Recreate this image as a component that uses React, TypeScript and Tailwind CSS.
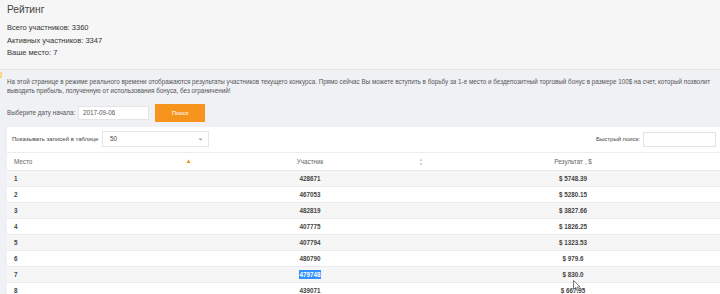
import React from "react";

const rows = [
  { place: "1", user: "428671", result: "$ 5748.39" },
  { place: "2", user: "467053", result: "$ 5280.15" },
  { place: "3", user: "482819", result: "$ 3827.66" },
  { place: "4", user: "407775", result: "$ 1826.25" },
  { place: "5", user: "407794", result: "$ 1323.53" },
  { place: "6", user: "480790", result: "$ 979.6" },
  { place: "7", user: "479748", result: "$ 830.0", selected: true },
  { place: "8", user: "439071", result: "$ 667.95" },
];

function SortAsc() {
  return (
    <svg width="5" height="6" viewBox="0 0 5 6" className="block">
      <path d="M2.5 0.5 L4.5 4 L0.5 4 Z" fill="#f7941d" />
    </svg>
  );
}

function SortBoth() {
  return (
    <svg width="4" height="8" viewBox="0 0 4 8" className="block">
      <path d="M2 0.5 L3.6 3 L0.4 3 Z" fill="#cfcfcf" />
      <path d="M2 7.5 L3.6 5 L0.4 5 Z" fill="#cfcfcf" />
    </svg>
  );
}

export default function App() {
  return (
    <div className="relative w-[720px] h-[294px] overflow-hidden bg-[#f0f1f5] font-['Liberation_Sans',Arial,sans-serif] text-[#333]">
      {/* header */}
      <div className="h-[70px] bg-[#f6f6f6] border-b border-[#e3e3e3] px-[7px] pt-[3px]">
        <h1 className="text-[10.2px] leading-[14px] text-[#444]">Рейтинг</h1>
        <div className="mt-[5px] text-[7.5px] leading-[12.5px] text-[#333]">
          <div>Всего участников: 3360</div>
          <div>Активных участников: 3347</div>
          <div>Ваше место: 7</div>
        </div>
      </div>

      {/* notice */}
      <div className="relative px-[7px] pt-[8px]">
        <div className="absolute left-0 top-[2px] w-[2px] h-[6px] bg-[#f5d88a]" />
        <p className="text-[6.3px] leading-[8.5px] text-[#555]">
          На этой странице в режиме реального времени отображаются результаты участников текущего конкурса. Прямо сейчас Вы можете вступить в борьбу за 1-е место и бездепозитный торговый бонус в размере 100$ на счет, который позволит выводить прибыль, полученную от использования бонуса, без ограничений!
        </p>
        <div className="mt-[9px] flex items-center h-[18px]">
          <span className="text-[6.3px] text-[#555] w-[71px] whitespace-nowrap">Выберите дату начала:</span>
          <div className="w-[71px] h-[14px] bg-white border border-[#e4e4e4] flex items-center pl-[4px] text-[6.3px] text-[#555]">
            2017-09-06
          </div>
          <button className="ml-[6px] w-[50px] h-[18px] bg-[#f7941d] text-white text-[6px] flex items-center justify-center">
            Поиск
          </button>
        </div>
      </div>

      {/* panel */}
      <div className="ml-[7px] mt-[5px] bg-white">
        <div className="flex items-center justify-between pl-[5px] pr-[4px] pt-[4px] pb-[5px]">
          <div className="flex items-center">
            <span className="text-[6px] text-[#444] w-[90px] whitespace-nowrap">Показывать записей в таблице</span>
            <div className="w-[107px] h-[16px] border border-[#e6e6e6] flex items-center justify-between pl-[7px] pr-[5px] text-[6.3px] text-[#444]">
              <span>50</span>
              <svg width="5" height="3" viewBox="0 0 5 3">
                <path d="M0.5 0.5 L2.5 2.5 L4.5 0.5 Z" fill="#999" />
              </svg>
            </div>
          </div>
          <div className="flex items-center">
            <span className="text-[6px] text-[#444] mr-[3px] whitespace-nowrap">Быстрый поиск:</span>
            <div className="w-[73px] h-[15px] border border-[#e2e2e2] bg-white" />
          </div>
        </div>

        <div className="border-t border-[#ececec]">
          <div className="grid grid-cols-[190px_233px_1fr] h-[18px] items-center border-b border-[#e8e8e8] text-[6.3px] text-[#666]">
            <div className="flex items-center justify-between pl-[7px] pr-[6px]">
              <span>Место</span>
              <SortAsc />
            </div>
            <div className="relative flex items-center justify-center pr-[7px]">
              <span>Участник</span>
              <div className="absolute right-[7px]">
                <SortBoth />
              </div>
            </div>
            <div className="flex items-center justify-center pr-[4px]">
              <span>Результат , $</span>
            </div>
          </div>
          {rows.map((r, i) => (
            <div
              key={r.place}
              className={`grid grid-cols-[190px_233px_1fr] h-[16px] items-center border-b border-[#ececec] text-[6.3px] font-bold text-[#444] ${
                i % 2 === 0 ? "bg-[#f6f6f6]" : "bg-white"
              }`}
            >
              <div className="pl-[7px]">{r.place}</div>
              <div className="flex justify-center pr-[7px]">
                {r.selected ? (
                  <span className="bg-[#3390ff] text-white">{r.user}</span>
                ) : (
                  <span>{r.user}</span>
                )}
              </div>
              <div className="flex justify-center pr-[4px]">{r.result}</div>
            </div>
          ))}
        </div>
      </div>

      {/* mouse cursor */}
      <svg
        className="absolute left-[573px] top-[280px]"
        width="8"
        height="12"
        viewBox="0 0 8 12"
      >
        <path
          d="M0.5 0.5 L0.5 9.5 L2.7 7.5 L4.2 11 L5.6 10.4 L4.1 7 L7.2 7 Z"
          fill="#fff"
          stroke="#555"
          strokeWidth="0.8"
          strokeLinejoin="round"
        />
      </svg>
    </div>
  );
}
